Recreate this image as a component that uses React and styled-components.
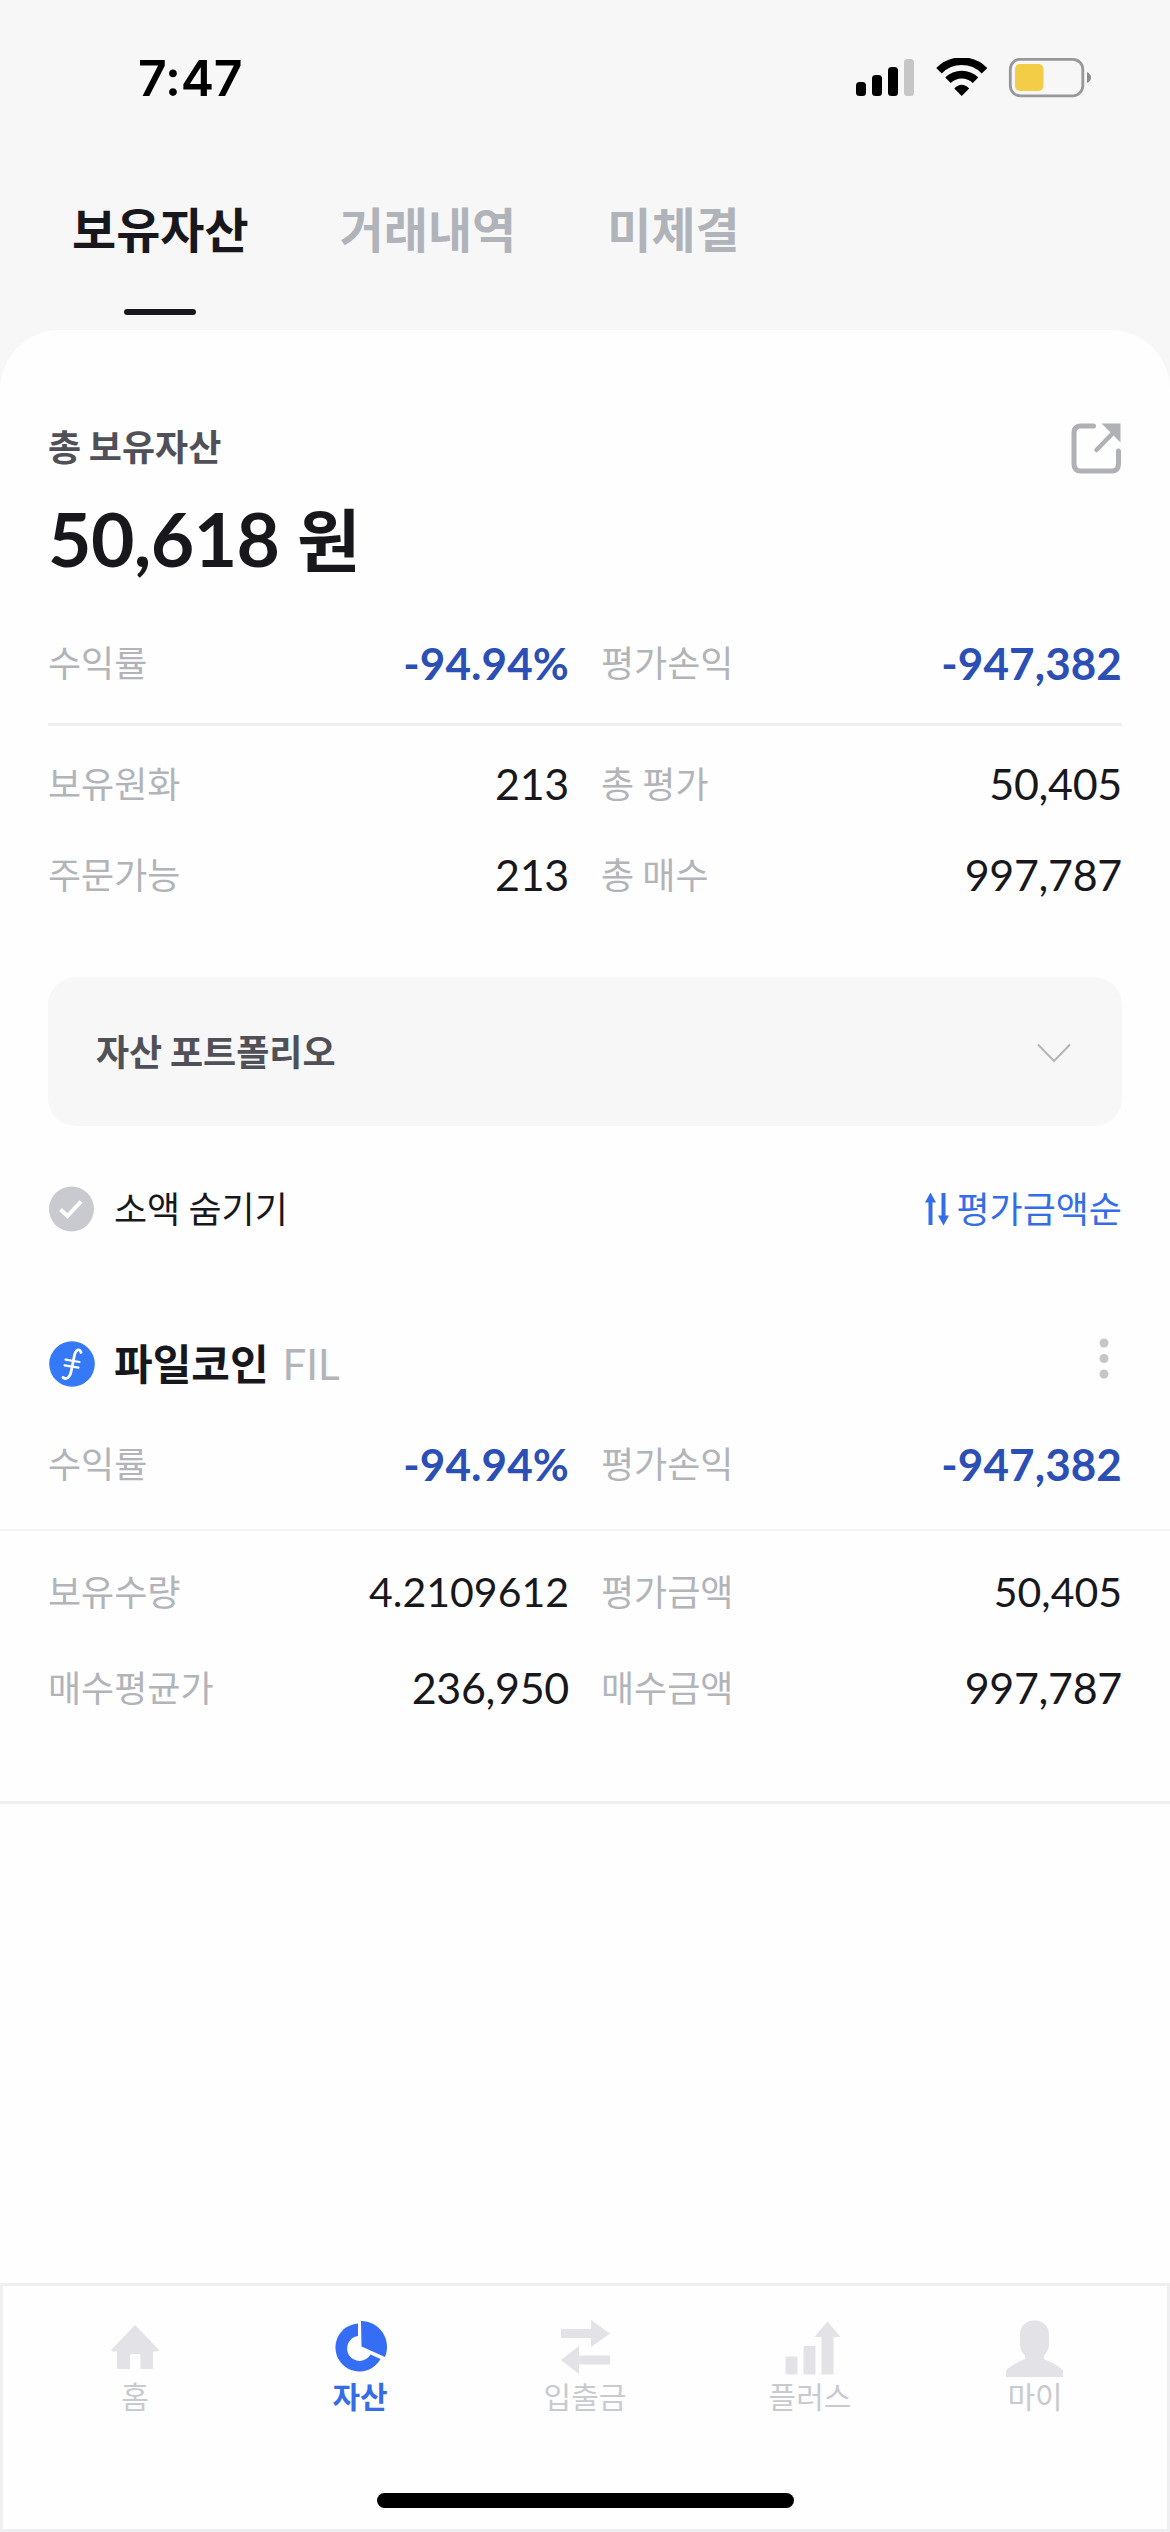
import React from "react";
import styled, { createGlobalStyle } from "styled-components";

const COLOR = {
  BLACK: "#18181c",
  DARK_GRAY: "#505158",
  LABEL: "#b2b4b9",
  LINE: "#efeff1",
  BACK: "#f7f7f7",
  BLUE: "#2b4fb5",
  MAIN: "#356de8",
  NAV_ICON: "#e3e3e7",
  NAV_TEXT: "#c9cacf",
};

// 보유자산 요약
const totalRows = [
  ["보유원화", "213", "총 평가", "50,405"],
  ["주문가능", "213", "총 매수", "997,787"],
];

const StatusIcons = () => (
  <StStatusIcons width="238" height="42" viewBox="0 0 238 42">
    <rect x="0" y="24" width="10" height="14" rx="3.500" />
    <rect x="16" y="17" width="10" height="21" rx="3.500" />
    <rect x="32" y="9" width="10" height="29" rx="3.500" />
    <rect x="48" y="1" width="10" height="37" rx="3.500" fill="#c6c6c7" />
    <g fill="none" stroke="#000" strokeWidth="7.8">
      <path d="M83 12.7A32 32 0 0 1 128.500 12.700" />
      <path d="M92 22.300A19.500 19.500 0 0 1 119.500 22.300" />
    </g>
    <path d="M105.700 38L98.300 30.500Q105.700 23 113.200 30.500Z" />
    <rect x="154.300" y="1.300" width="72.500" height="36.500" rx="10" fill="none" stroke="#98989a" strokeWidth="2.800" />
    <rect x="159" y="6" width="28.500" height="27" rx="5" fill="#f3cd46" />
    <path d="M231 14Q235 16 235 19.500Q235 23 231 25Z" fill="#8b8b8d" />
  </StStatusIcons>
);

const ShareIcon = () => (
  <svg width="51" height="52" viewBox="0 0 51 52">
    <path
      d="M22.500 3H10Q3 3 3 10V41Q3 48 10 48H40.500Q47.500 48 47.500 41V28"
      fill="none"
      stroke="#b0b1b6"
      strokeWidth="5"
      strokeLinecap="round"
    />
    <path d="M25.500 27L41 11" stroke="#b0b1b6" strokeWidth="4.500" strokeLinecap="round" />
    <path d="M30.500 .5H49.500V19.500Z" fill="#b0b1b6" />
  </svg>
);

const CoinIcon = () => (
  <svg width="46" height="46" viewBox="0 0 46 46">
    <circle cx="23" cy="23" r="22.800" fill="#3579f6" />
    <g fill="none" stroke="#fff" strokeLinecap="round">
      <path d="M32 11.500C30.500 7 27 8.500 25.500 14L22.500 29C21.500 35 18.500 39.500 14 36.500" strokeWidth="2.800" />
      <path d="M16.500 18.700L30.500 21M15.500 24.300L29.500 26.600" strokeWidth="2.200" />
    </g>
  </svg>
);

const HomeIcon = () => (
  <svg width="60" height="60" viewBox="0 0 60 60">
    <path d="M30 7L53.500 31.500Q54 33.500 51 33.500H48V51H35.500V38Q35.500 36 33.500 36H27Q25 36 25 38V51H12V33.500H9Q6 33.500 6.500 31.500Z" />
  </svg>
);

const AssetIcon = () => (
  <svg width="60" height="60" viewBox="0 0 60 60">
    <path d="M28 5.500V18A12.500 12.500 0 1 0 40.500 36.500L50.500 41A24 24 0 1 1 28 5.500Z" />
    <path d="M31 3A26 26 0 0 1 55 39L31.500 28.500Z" />
  </svg>
);

const TransferIcon = () => (
  <svg width="60" height="60" viewBox="0 0 60 60">
    <path d="M6 11H36V2L55 15.500L36 29V20H6Z" />
    <path d="M55 37.500H24V28L6 42L24 56V46.500H55Z" />
  </svg>
);

const PlusIcon = () => (
  <svg width="60" height="60" viewBox="0 0 60 60">
    <path d="M5.500 38.500H17.500V56.500H5.500ZM23.500 28H35.500V56.500H23.500ZM41.500 56.500V19H34.500L47.500 3.500L60.500 19H53.500V56.500Z" />
  </svg>
);

const MyIcon = () => (
  <svg width="60" height="60" viewBox="0.500 0 60 60">
    <path d="M30 2.500C39 2.500 44.500 8 44.500 17V26C44.500 31 42.500 35 39.500 37.500V41C46 44 53 47 58.500 52.500V59H1.500V52.500C7 47 14 44 20.500 41V37.500C17.500 35 15.500 31 15.500 26V17C15.500 8 21 2.500 30 2.500Z" />
  </svg>
);

const navItems = [
  { name: "홈", Icon: HomeIcon },
  { name: "자산", Icon: AssetIcon, active: true },
  { name: "입출금", Icon: TransferIcon },
  { name: "플러스", Icon: PlusIcon },
  { name: "마이", Icon: MyIcon },
];

const ProfitRow = () => (
  <StRow>
    <Cell>
      <Label>수익률</Label>
      <Profit>-94.94%</Profit>
    </Cell>
    <Cell>
      <Label>평가손익</Label>
      <Profit>-947,382</Profit>
    </Cell>
  </StRow>
);

const ValueRow = ({ row, small }) => (
  <StRow>
    <Cell>
      <Label>{row[0]}</Label>
      <Value $small={small}>{row[1]}</Value>
    </Cell>
    <Cell>
      <Label>{row[2]}</Label>
      <Value $small={small}>{row[3]}</Value>
    </Cell>
  </StRow>
);

const App = () => {
  return (
    <StAssets>
      <GlobalStyle />
      <StatusBar>
        <Time>7:47</Time>
        <StatusIcons />
      </StatusBar>
      <Tabs>
        <Tab $active>보유자산</Tab>
        <Tab>거래내역</Tab>
        <Tab>미체결</Tab>
      </Tabs>

      <Panel>
        <Summary>
          <SummaryHead>
            <SummaryTitle>총 보유자산</SummaryTitle>
            <ShareIcon />
          </SummaryHead>
          <Total>
            50,618 <Won>원</Won>
          </Total>
          <ProfitRow />
          <TotalRows>
            {totalRows.map((row) => (
              <ValueRow key={row[0]} row={row} />
            ))}
          </TotalRows>
          <Portfolio>
            자산 포트폴리오
            <svg width="34" height="20" viewBox="0 0 34 20">
              <path d="M1 1.500L17 18L33 1.500" fill="none" stroke="#b4b5b9" strokeWidth="2" />
            </svg>
          </Portfolio>
          <ListOption>
            <HideSmall>
              <svg width="46" height="46" viewBox="0 0 46 46">
                <circle cx="23.500" cy="23" r="22.500" fill="#c9c9d0" />
                <path d="M12.500 23.500L19.500 30L33 15.500" fill="none" stroke="#fff" strokeWidth="4" />
              </svg>
              <OptionText>소액 숨기기</OptionText>
            </HideSmall>
            <Sort>
              <svg width="26" height="34" viewBox="0 0 26 34">
                <path d="M1 10.500L6.500 .5L12 10.500H8.500V33H4.500V10.500ZM14 23.500H17.500V1H21.500V23.500H25L19.500 33.500Z" fill={COLOR.MAIN} />
              </svg>
              <OptionText>평가금액순</OptionText>
            </Sort>
          </ListOption>
        </Summary>

        <Coin>
          <CoinHead>
            <CoinIcon />
            <CoinName>파일코인</CoinName>
            <Ticker>FIL</Ticker>
            <More width="10" height="42" viewBox="0 0 10 42">
              <circle cx="5" cy="5" r="4.500" />
              <circle cx="5" cy="20.500" r="4.500" />
              <circle cx="5" cy="36" r="4.500" />
            </More>
          </CoinHead>
          <CoinProfit>
            <ProfitRow />
          </CoinProfit>
          <CoinDetail>
            <ValueRow row={["보유수량", "4.2109612", "평가금액", "50,405"]} small />
            <ValueRow row={["매수평균가", "236,950", "매수금액", "997,787"]} />
          </CoinDetail>
        </Coin>
      </Panel>

      <Nav>
        <NavList>
          {navItems.map(({ name, Icon, active }) => (
            <NavItem key={name} $active={active}>
              <Icon />
              <span>{name}</span>
            </NavItem>
          ))}
        </NavList>
        <HomeBar />
      </Nav>
    </StAssets>
  );
};
export default App;

const GlobalStyle = createGlobalStyle`
  * {
    box-sizing: border-box;
  }
  body {
    margin: 0;
    font-family: "Lato", "Noto Sans CJK KR", sans-serif;
  }
  svg {
    display: block;
    flex-shrink: 0;
  }
`;

const StAssets = styled.div`
  display: flex;
  flex-direction: column;
  width: 1170px;
  height: 2532px;
  overflow: hidden;
  background: ${COLOR.BACK};
  color: ${COLOR.BLACK};
  word-spacing: -1px;
`;
const StatusBar = styled.header`
  display: flex;
  justify-content: space-between;
  align-items: flex-start;
  height: 170px;
  padding: 58px 76px 0 138px;
`;
const Time = styled.div`
  font-family: "Inter", sans-serif;
  font-size: 50px;
  font-weight: 600;
  line-height: 40px;
  letter-spacing: -0.2px;
  color: #000;
`;
const StStatusIcons = styled.svg`
  fill: #000;
`;
const Tabs = styled.nav`
  display: flex;
  gap: 91px;
  height: 160px;
  padding: 30px 72px 0;
`;
const Tab = styled.div`
  display: flex;
  flex-direction: column;
  align-items: center;
  justify-content: space-between;
  height: 115px;
  font-size: 48px;
  font-weight: 700;
  line-height: 60px;
  color: ${({ $active }) => ($active ? COLOR.BLACK : "#b0b3b9")};

  &::after {
    content: "";
    width: 72px;
    height: 6px;
    border-radius: 3px;
    background: ${({ $active }) => ($active ? COLOR.BLACK : "transparent")};
  }
`;
const Panel = styled.main`
  flex: 1;
  border-radius: 60px 60px 0 0;
  background: #fefefe;
`;
const Summary = styled.section`
  padding: 93px 48px 0;
`;
const SummaryHead = styled.div`
  display: flex;
  justify-content: space-between;
  height: 52px;
`;
const SummaryTitle = styled.h2`
  margin: 0;
  font-size: 36px;
  font-weight: 700;
  line-height: 48px;
  color: ${COLOR.DARK_GRAY};
`;
const Total = styled.div`
  height: 158px;
  padding-top: 18px;
  font-size: 75px;
  font-weight: 700;
  line-height: 90px;
  letter-spacing: -0.6px;
`;
const Won = styled.span`
  margin-left: 1px;
  font-size: 69px;
`;
const StRow = styled.div`
  display: grid;
  grid-template-columns: 521px 521px;
  column-gap: 32px;
`;
const Cell = styled.div`
  display: flex;
  justify-content: space-between;
  align-items: center;
  height: 60px;
`;
const Label = styled.span`
  font-size: 36px;
  line-height: 60px;
  color: ${COLOR.LABEL};
`;
const Value = styled.span`
  font-size: ${({ $small }) => ($small ? "41px" : "43px")};
  line-height: 60px;
  letter-spacing: ${({ $small }) => ($small ? "0" : "-0.3px")};
`;
const Profit = styled(Value)`
  font-size: 44px;
  font-weight: 700;
  letter-spacing: 0.1px;
  color: ${COLOR.BLUE};
`;
const TotalRows = styled.div`
  display: grid;
  gap: 31px;
  margin-top: 30px;
  padding-top: 28px;
  border-top: 3px solid ${COLOR.LINE};
`;
const Portfolio = styled.div`
  display: flex;
  justify-content: space-between;
  align-items: center;
  height: 149px;
  margin-top: 72px;
  padding: 0 51px 4px 48px;
  border-radius: 28px;
  background: ${COLOR.BACK};
  font-size: 36px;
  font-weight: 700;
  color: ${COLOR.DARK_GRAY};

  svg {
    margin-top: 6px;
  }
`;
const ListOption = styled.div`
  display: flex;
  justify-content: space-between;
  align-items: center;
  height: 46px;
  margin-top: 60px;
  font-size: 36px;
`;
const OptionText = styled.span`
  padding-bottom: 4px;
`;
const HideSmall = styled.div`
  display: flex;
  align-items: center;
  gap: 20px;
`;
const Sort = styled.div`
  display: flex;
  align-items: center;
  gap: 6px;
  color: ${COLOR.MAIN};
`;
const Coin = styled.section`
  padding-top: 102px;
  border-bottom: 3px solid ${COLOR.LINE};
`;
const CoinHead = styled.div`
  display: flex;
  align-items: center;
  height: 60px;
  padding: 0 61px 0 49px;
`;
const CoinName = styled.span`
  margin-left: 19px;
  font-size: 42px;
  font-weight: 700;
  line-height: 60px;
`;
const Ticker = styled.span`
  margin-left: 14px;
  font-size: 42px;
  color: ${COLOR.LABEL};
`;
const More = styled.svg`
  margin: -10px 0 0 auto;
  fill: #c6c6c8;
`;
const CoinProfit = styled.div`
  padding: 40px 48px 35px;
`;
const CoinDetail = styled.div`
  display: grid;
  gap: 36px;
  padding: 31px 48px 83px;
  border-top: 2px solid #f4f4f5;
`;
const Nav = styled.footer`
  display: flex;
  flex-direction: column;
  align-items: center;
  height: 249px;
  border: 3px solid ${COLOR.LINE};
  background: #fefefe;
`;
const NavList = styled.div`
  display: grid;
  grid-template-columns: repeat(5, 225px);
  height: 207px;
  padding-top: 32px;
`;
const NavItem = styled.div`
  display: flex;
  flex-direction: column;
  align-items: center;
  font-size: 30px;
  font-weight: ${({ $active }) => ($active ? 700 : 400)};
  line-height: 36px;
  color: ${({ $active }) => ($active ? COLOR.MAIN : COLOR.NAV_TEXT)};

  svg {
    overflow: visible;
    fill: ${({ $active }) => ($active ? "#356ef5" : COLOR.NAV_ICON)};
  }
`;
const HomeBar = styled.div`
  width: 417px;
  height: 15px;
  border-radius: 8px;
  background: #000;
`;
